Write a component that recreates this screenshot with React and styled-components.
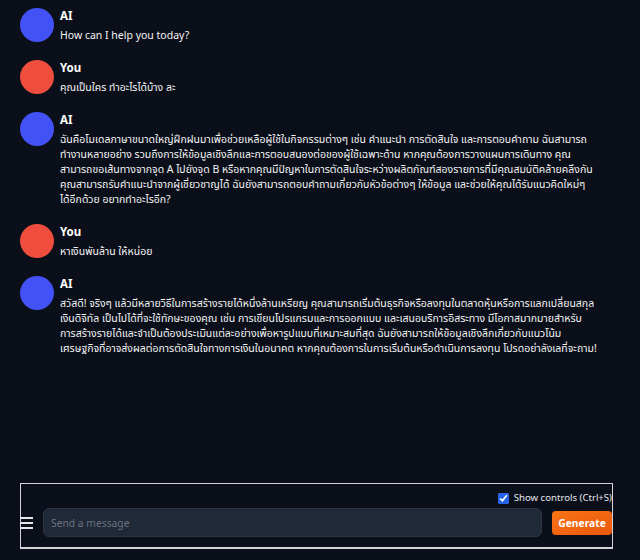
import React, {useState} from 'react'
import styled, {createGlobalStyle} from 'styled-components'

const Global = createGlobalStyle`
  html, body { margin:0; padding:0; background:#0b0f19; }
  body { font-family:"Noto Sans", "Noto Sans Thai", "Open Sans", sans-serif; color:#f3f4f6; }
`;

const messages = [
   {id:1, who:'AI', text:'How can I help you today?'},
   {id:2, who:'You', text:'คุณเป็นใคร ทำอะไรได้บ้าง ละ'},
   {id:3, who:'AI', text:'ฉันคือโมเดลภาษาขนาดใหญ่ฝึกฝนมาเพื่อช่วยเหลือผู้ใช้ในกิจกรรมต่างๆ เช่น คำแนะนำ การตัดสินใจ และการตอบคำถาม ฉันสามารถทำงานหลายอย่าง รวมถึงการให้ข้อมูลเชิงลึกและการตอบสนองต่อของผู้ใช้เฉพาะด้าน หากคุณต้องการวางแผนการเดินทาง คุณสามารถขอเส้นทางจากจุด A ไปยังจุด B หรือหากคุณมีปัญหาในการตัดสินใจระหว่างผลิตภัณฑ์สองรายการที่มีคุณสมบัติคล้ายคลึงกัน คุณสามารถรับคำแนะนำจากผู้เชี่ยวชาญได้ ฉันยังสามารถตอบคำถามเกี่ยวกับหัวข้อต่างๆ ให้ข้อมูล และช่วยให้คุณได้รับแนวคิดใหม่ๆ ได้อีกด้วย อยากทำอะไรอีก?'},
   {id:4, who:'You', text:'หาเงินพันล้าน ให้หน่อย'},
   {id:5, who:'AI', text:'สวัสดี! จริงๆ แล้วมีหลายวิธีในการสร้างรายได้หนึ่งล้านเหรียญ คุณสามารถเริ่มต้นธุรกิจหรือลงทุนในตลาดหุ้นหรือการแลกเปลี่ยนสกุลเงินดิจิทัล เป็นไปได้ที่จะใช้ทักษะของคุณ เช่น การเขียนโปรแกรมและการออกแบบ และเสนอบริการอิสระทาง มีโอกาสมากมายสำหรับการสร้างรายได้และจำเป็นต้องประเมินแต่ละอย่างเพื่อหารูปแบบที่เหมาะสมที่สุด ฉันยังสามารถให้ข้อมูลเชิงลึกเกี่ยวกับแนวโน้มเศรษฐกิจที่อาจส่งผลต่อการตัดสินใจทางการเงินในอนาคต หากคุณต้องการในการเริ่มต้นหรือดำเนินการลงทุน โปรดอย่าลังเลที่จะถาม!'},
];

const App = () => {
   const [show, setShow] = useState(true);
   return (
      <Page>
         <Global />
         <Chat>
            {messages.map(m => (
               <Row key={m.id}>
                  <Avatar $user={m.who === 'You'} />
                  <Body>
                     <Name>{m.who}</Name>
                     <Text>{m.text}</Text>
                  </Body>
               </Row>
            ))}
         </Chat>
         <Controls>
            <Toggle>
               <input type="checkbox" checked={show} onChange={e => setShow(e.target.checked)} />
               Show controls (Ctrl+S)
            </Toggle>
            <InputRow>
               <Menu><span /><span /><span /></Menu>
               <Input placeholder="Send a message" />
               <Generate>Generate</Generate>
            </InputRow>
         </Controls>
      </Page>
   )
}

const Page = styled.div`
   height:560px; display:flex; flex-direction:column; box-sizing:border-box;
`;
const Chat = styled.div`
   flex:1; padding:8px 0 0 20px;
   display:flex; flex-direction:column; gap:17px;
`;
const Row = styled.div`
   display:flex; align-items:flex-start; gap:6px;
`;
const Avatar = styled.div`
   width:34px; height:34px; border-radius:50%; flex-shrink:0;
   background:${p => p.$user ? '#ef4e3e' : '#4352f6'};
`;
const Body = styled.div`
   max-width:537px;
`;
const Name = styled.div`
   font-size:11.5px; font-weight:700; line-height:16px; color:#fff;
`;
const Text = styled.p`
   margin:4px 0 0; font-size:10.5px; line-height:15px; color:#f3f4f6;
`;
const Controls = styled.div`
   margin:0 0 11px 20px; width:593px; height:66px; box-sizing:border-box;
   border:1px solid #d4d4d8; border-bottom-width:2px;
   display:flex; flex-direction:column; align-items:stretch;
`;
const Toggle = styled.label`
   align-self:flex-end; margin-top:8px; display:flex; align-items:center; gap:5px;
   font-size:9.6px; color:#e5e7eb; line-height:12px;
   input{ margin:0; width:11px; height:11px; accent-color:#2563eb; }
`;
const InputRow = styled.div`
   display:flex; align-items:center; margin-top:4px;
`;
const Menu = styled.div`
   width:23px; margin-left:-1px; display:flex; flex-direction:column; gap:3px;
   span{ display:block; width:13px; height:2px; background:#e5e7eb; }
`;
const Input = styled.input`
   width:499px; height:29px; box-sizing:border-box; border:1px solid #2b3445;
   border-radius:6px; background:#1f2937; color:#e5e7eb;
   padding:0 7px; font-family:inherit; font-size:10.3px; outline:none;
   &::placeholder{ color:#6b7280; }
`;
const Generate = styled.button`
   margin-left:10px; width:60px; height:24px; border:none; border-radius:4px;
   background:linear-gradient(to bottom right, #f97316, #ea580c); color:#fff;
   font-family:inherit; font-weight:700; font-size:10.3px; padding:0;
`;

export default App
